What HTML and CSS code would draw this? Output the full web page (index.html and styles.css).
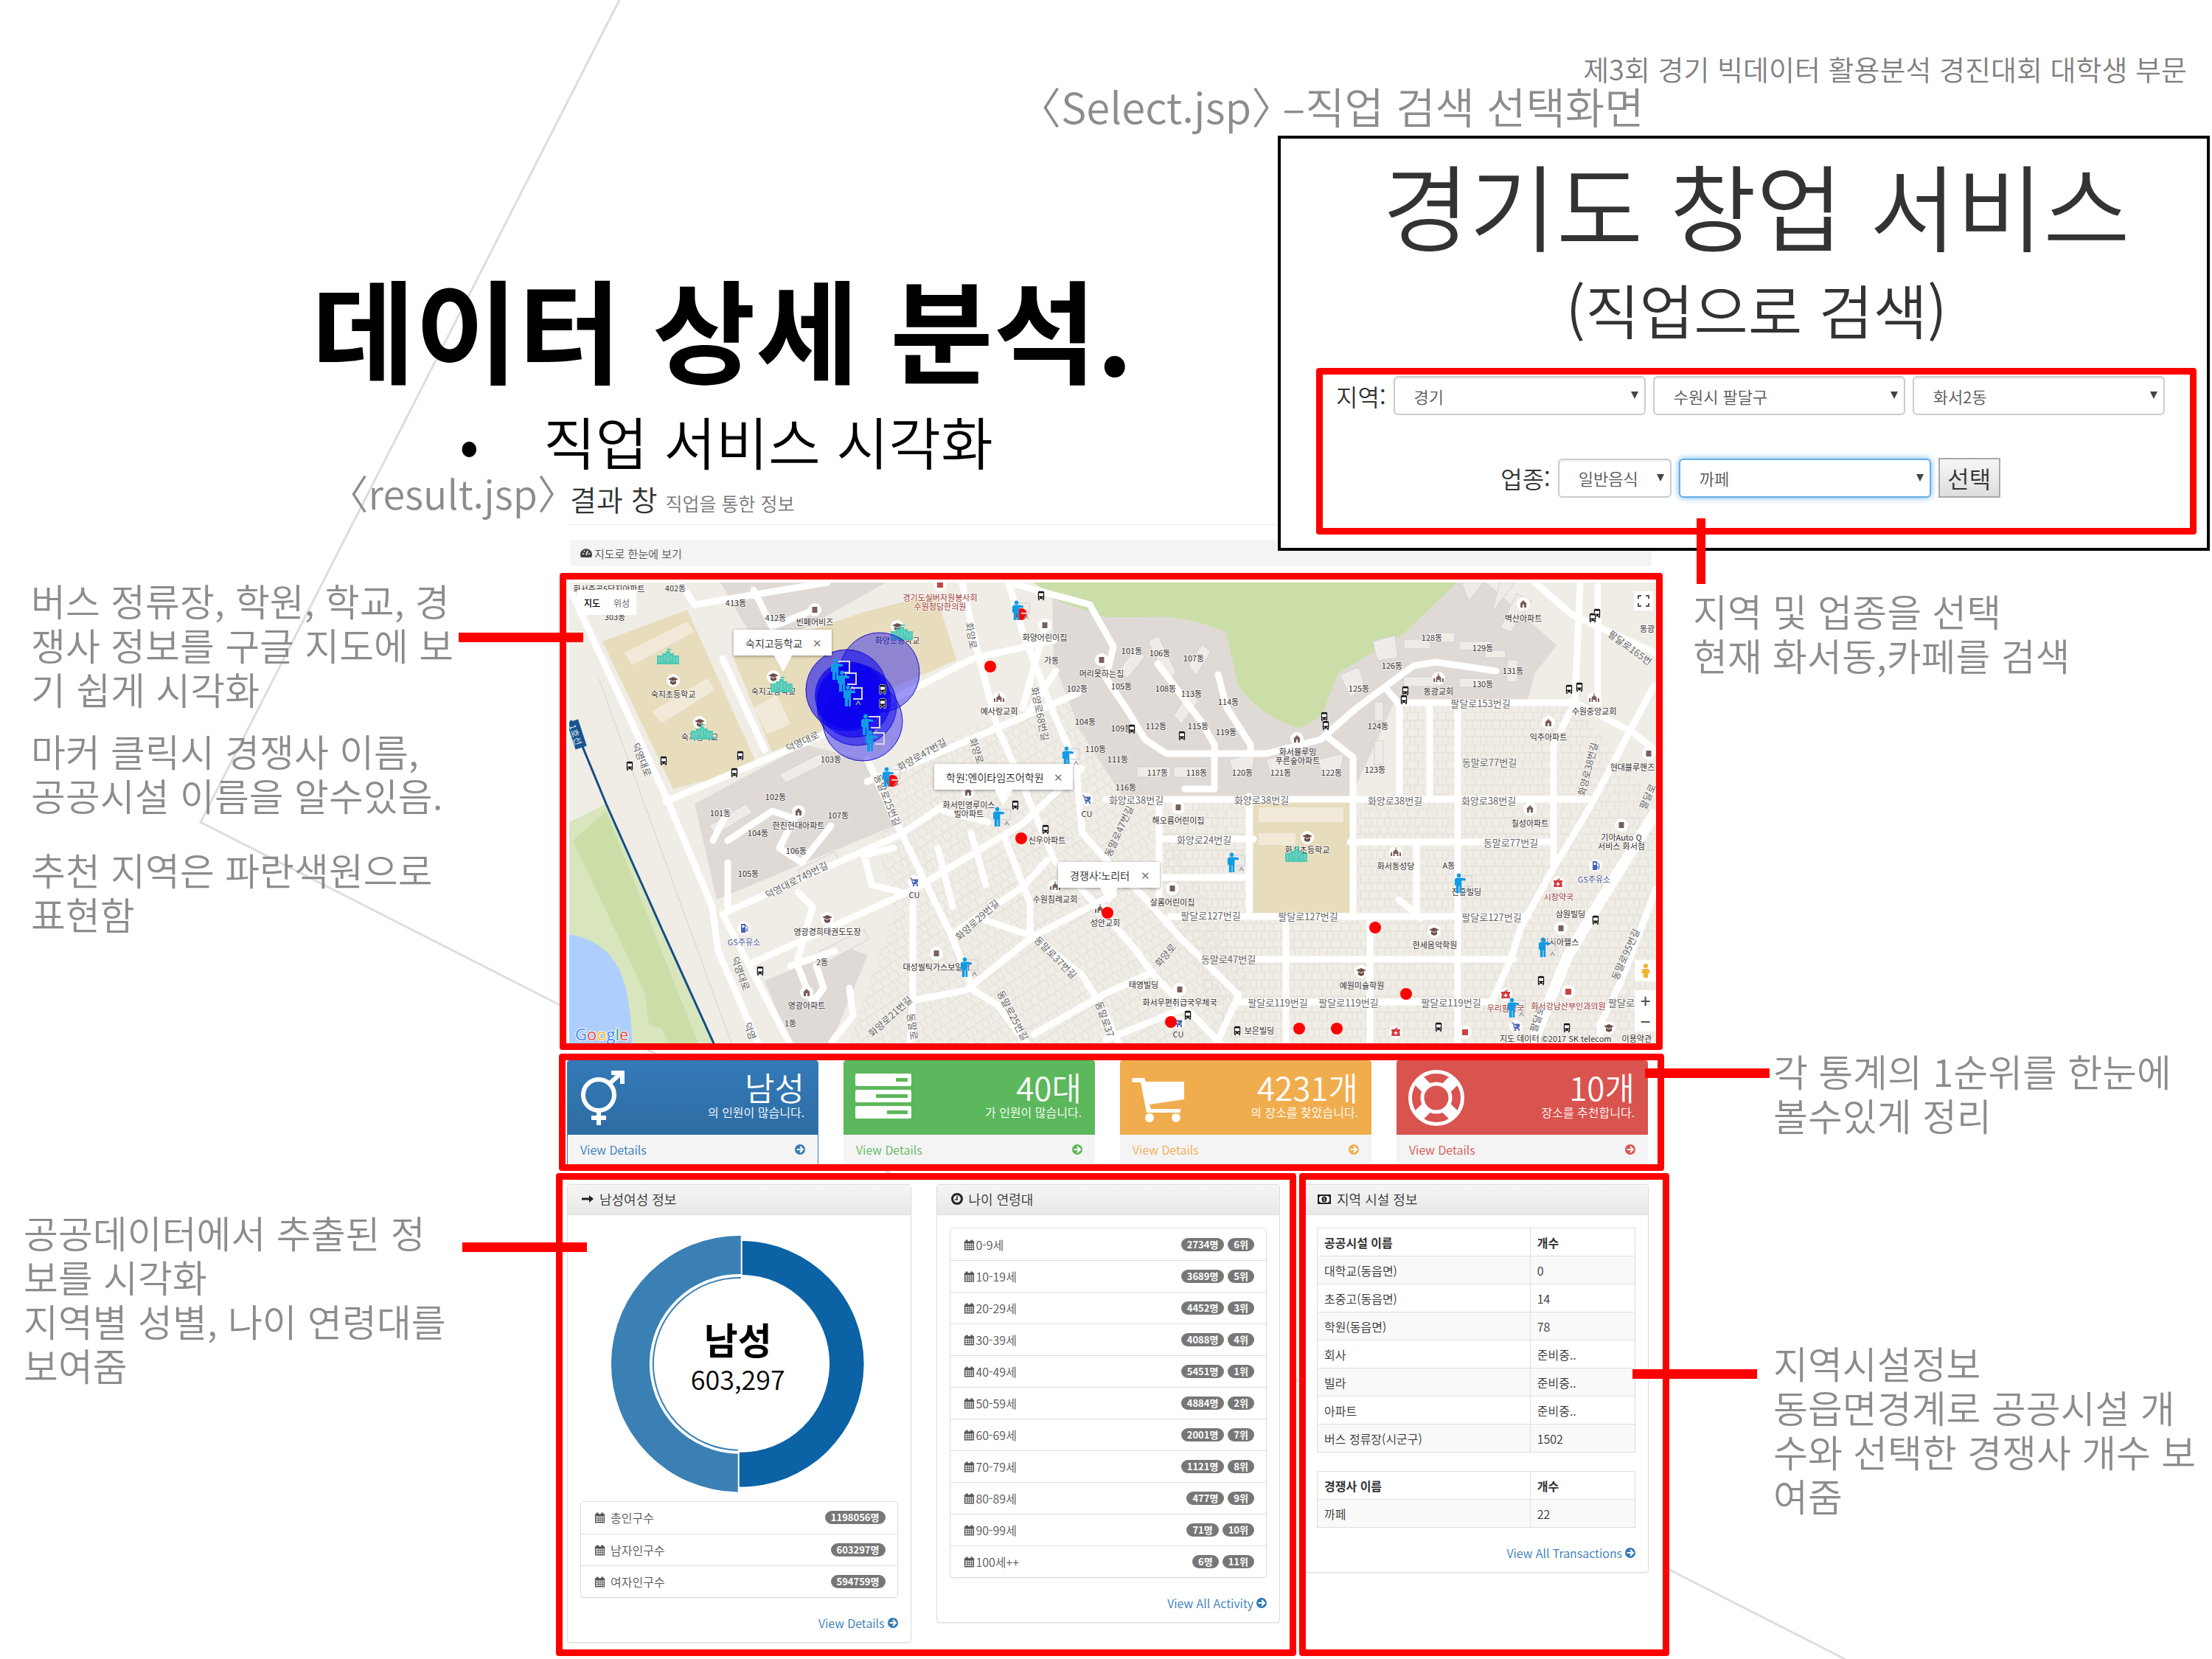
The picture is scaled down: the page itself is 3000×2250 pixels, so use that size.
FILE: index.html
```html
<!DOCTYPE html>
<html lang="ko">
<head>
<meta charset="utf-8">
<title>데이터 상세 분석</title>
<link rel="stylesheet" href="styles.css">
</head>
<body>
<svg class="defs" aria-hidden="true">
  <defs>
    <symbol id="calendar" viewBox="0 0 16 16"><path fill="currentColor" d="M1 3h2V1h3v2h4V1h3v2h2v13H1z"/><path fill="#fff" d="M2.500 6.500h2.500v2H2.500zM6 6.500h2v2H6zM9 6.500h2v2H9zM12 6.500h1.700v2H12zM2.500 9.500h2.500v2H2.500zM6 9.500h2v2H6zM9 9.500h2v2H9zM12 9.500h1.700v2H12zM2.500 12.500h2.500v2H2.500zM6 12.500h2v2H6zM9 12.500h2v2H9zM12 12.500h1.700v2H12z"/></symbol>
    <symbol id="go" viewBox="0 0 16 16"><circle cx="8" cy="8" r="8" fill="currentColor"/><path d="M3 8h9M8 3.500 12.500 8 8 12.500" fill="none" stroke="#fff" stroke-width="2.400"/></symbol>
    <symbol id="bus" viewBox="0 0 12 14"><path fill="#111" stroke="#fff" stroke-width=".6" d="M3 .5h6l1.500 1.500v9.500H10V13.500H8V11.500H4v2H2v-2h-.5V2z"/><path fill="#fff" d="M3 3.500h6v4H3zM3 9h1.500v1.200H3zM7.500 9H9v1.200H7.500z"/></symbol>
    <symbol id="school" viewBox="0 0 30 22"><path fill="#52c9b4" d="M0 10h7V7h5V4h2V0h1v1h4v2h-4v1h3v3h5v3h7v12H0z"/><path stroke="#8adccc" d="M3 12v7M7 12v7M11 10v6M19 10v6M23 12v7M27 12v7M15 7v12" stroke-width="1"/></symbol>
    <symbol id="teacher" viewBox="0 0 28 30"><path d="M10 4h15v15H13" fill="none" stroke="#ddd8de" stroke-width="2"/><path d="m17 27 3-5 3 5" fill="none" stroke="#999" stroke-width="1.500"/><circle cx="6" cy="3.500" r="3" fill="#109be4"/><path fill="#109be4" d="M2 7h8l6 1v3h-6v18H7V19H6v10H2V18H0V9z"/></symbol>
    <symbol id="place" viewBox="0 0 20 20"><circle cx="10" cy="10" r="9" fill="#fff"/><path fill="#7b5f59" d="M6.500 6h7v8h-7z"/></symbol>
    <symbol id="home" viewBox="0 0 20 20"><circle cx="10" cy="10" r="9" fill="#fff"/><path fill="#7b5f59" d="m10 5 5 5h-1v5h-3v-4H9v4H6v-5H5z"/></symbol>
    <symbol id="church" viewBox="0 0 20 20"><circle cx="10" cy="10" r="9" fill="#fff"/><path fill="#7b5f59" d="M9.500 3h1v3l3 3v6h-2v-3h-3v3h-2V9l3-3zM3 10h2v5H3zM15 10h2v5h-2z"/></symbol>
    <symbol id="cap" viewBox="0 0 20 20"><circle cx="10" cy="10" r="9" fill="#fff"/><path fill="#6d4f49" d="m10 5 7 3-7 3-7-3zM6 10l4 2 4-2v4l-4 2-4-2z"/></symbol>
    <symbol id="pharm" viewBox="0 0 20 20"><circle cx="10" cy="10" r="9" fill="#fff"/><path fill="#d5373b" d="M4 6h4l4-3 1 1-2 2h5v2l-1 1 1 6H4l1-6-1-1z"/><path d="M10 8.500v5M7.500 11h5" stroke="#fff" stroke-width="1.500"/></symbol>
    <symbol id="clinic" viewBox="0 0 20 20"><circle cx="10" cy="10" r="9" fill="#fff"/><path fill="#c9433f" d="M6 6h8v8H6z"/></symbol>
    <symbol id="cart" viewBox="0 0 20 20"><circle cx="10" cy="10" r="9" fill="#fff"/><path d="M4 5h2l2 8h7M7 7h8l-1 4H8" fill="#4a63b5" stroke="#4a63b5"/><circle cx="9" cy="15" r="1.200" fill="#4a63b5"/><circle cx="14" cy="15" r="1.200" fill="#4a63b5"/></symbol>
    <symbol id="gas" viewBox="0 0 20 20"><circle cx="10" cy="10" r="9" fill="#fff"/><path fill="#4a63b5" d="M6 4h6v12H6z"/><path fill="#fff" d="M7.500 6h3v3h-3z"/><path d="M12 6l3 2v6h-2v-4" fill="none" stroke="#4a63b5"/></symbol>
    <pattern id="lots" width="26" height="22" patternUnits="userSpaceOnUse"><path d="M0 0h26M0 11h26M7 0v11M19 0v11M3 11v11M14 11v11M22 11v11" fill="none" stroke="#e0dcd3"/></pattern>
    <pattern id="lots-tilt" width="26" height="22" patternUnits="userSpaceOnUse" patternTransform="rotate(-33)"><path d="M0 0h26M0 11h26M7 0v11M19 0v11M3 11v11M14 11v11M22 11v11" fill="none" stroke="#e0dcd3"/></pattern>
  </defs>
</svg>

<div class="slide">
  <svg class="backdrop" viewBox="0 0 3000 2250" preserveAspectRatio="none" aria-hidden="true"><path d="M840 0 272 1115 2502 2250"/></svg>

  <header class="top">
    <p class="contest">제3회 경기 빅데이터 활용분석 경진대회 대학생 부문</p>
    <p class="caption"><span class="angle">〈</span>Select.jsp<span class="angle">〉</span> –직업 검색 선택화면</p>
  </header>

  <section class="hero">
    <h1>데이터 상세 분석.</h1>
    <ul><li>직업 서비스 시각화</li></ul>
  </section>

  <section class="search-card">
    <h2>경기도 창업 서비스</h2>
    <h3>(직업으로 검색)</h3>
    <form class="search-form">
      <div class="field-row">
        <label for="sido">지역:</label>
        <span class="select"><select id="sido"><option>경기</option></select></span>
        <span class="select"><select aria-label="시군구"><option>수원시 팔달구</option></select></span>
        <span class="select"><select aria-label="동"><option>화서2동</option></select></span>
      </div>
      <div class="field-row centered">
        <label for="kind">업종:</label>
        <span class="select short"><select id="kind"><option>일반음식</option></select></span>
        <span class="select focused"><select aria-label="세부 업종"><option>까페</option></select></span>
        <button type="button">선택</button>
      </div>
    </form>
    <i class="line line-down"></i>
  </section>

  <main class="board">
    <aside class="notes left">
      <p class="file"><span class="angle">〈</span>result.jsp<span class="angle">〉</span></p>
      <p class="note n-map">버스 정류장, 학원, 학교, 경<br>쟁사 정보를 구글 지도에 보<br>기 쉽게 시각화<i class="line"></i></p>
      <p class="note n-marker">마커 클릭시 경쟁사 이름,<br>공공시설 이름을 알수있음.</p>
      <p class="note n-circle">추천 지역은 파란색원으로<br>표현함</p>
      <p class="note n-public">공공데이터에서 추출된 정<br>보를 시각화<br>지역별 성별, 나이 연령대를<br>보여줌<i class="line"></i></p>
    </aside>

    <div class="dash">
      <div class="dash-head"><h2>결과 창 <small>직업을 통한 정보</small></h2></div>
      <div class="map-title"><svg width="16" height="14" viewBox="0 0 16 14"><path fill="#444" d="M1 13a8 8 0 1 1 14 0z"/><path stroke="#fff" stroke-width="1.500" d="M8 10 10 4M3 8h2M11 8h2M5 4l1 1"/></svg>지도로 한눈에 보기</div>

      <div class="frame map-frame">
        <div class="map">
          <svg class="map-art" viewBox="0 0 1474 625" role="img" aria-label="화서동 지도">
            <rect width="1474" height="625" fill="#f0ede6"/>
            <path fill="url(#lots-tilt)" d="M400 270 560 190 700 150 800 300 920 540 880 625H380l60-180z"/>
            <path fill="url(#lots)" d="M800 295h670v330H900L800 430zM1130 165h235l105 130h-340z"/>
            <path fill="#dfdad6" d="M150 0h280L260 95 205 0zM655 10l235 40L1204 0h40l95 85-30 40-10 38h-180l-60 130H752l-60-95-35-90zM170 300l150-80 80 20 40 90-240 100zM265 540l110-45 30 10-50 120h-55z"/>
            <path fill="#e7dcbc" d="M45 80 160 37l96 213-115 30zM222 100 400 40l97-25 28 90-125 55-63 45-62 25zM928 290h131v158H928z"/>
            <path fill="#f1ead9" d="m75 95 85-42 10 14-85 45zM112 175l75-45 10 16-72 45zM250 170l32-18 18 40-32 14zM935 305h115v20H935zM935 340h50v16h-50z"/>
            <path fill="#cbdea8" d="M630 0h574l-73 70-88 53-21 54q-30 28-42 17-45-15-72-54l-18-73q-60-25-112-20h-50l-60-20z"/>
            <path fill="#d8e5bd" d="M0 325 50 300l146 325H85L60 510 0 475z"/><path fill="#cbdea8" d="m5 350 45-40 125 315h-40zM90 450l50 160-32-10z"/>
            <path fill="#aeceff" d="M0 477q60 10 76 70 9 40 9 78H0z"/>
            <g class="blocks"><path d="m745 120 22-30 14 10-24 30zM785 80l14-8 24 50-12 10zM840 112l18-28 12 10-20 32zM820 180l20-30 14 10-24 32zM770 250h45v14h-45zM820 250h45v14h-45zM895 240l35-8-4 26-24 4zM945 240l35-8-4 26-24 4zM1015 240l35-8-4 26-24 4zM1132 77h36v13h-36zM1165 68h36v13h-36zM1207 80h44v12h-44zM1242 92h28v10h-28zM1132 128h44v13h-44zM1207 130h44v12h-44zM1272 105h14v30h-14zM1090 80l30-8 4 30-28 4zM1045 125l26-10 8 26-20 14zM1092 162h12v25h-12zM1092 215h12v32h-12zM1210 0l30 0-20 25zM1262 0h20l-30 40zM1285 15l20 10-28 42-14-6zM190 330l50-30 8 12-50 30zM310 390l50-25 6 12-50 26zM340 500l60-30 6 14-55 30zM285 260l55-28 8 12-55 28z"/></g>
            <g class="roads">
              <path d="M0 7 131 290l63 150 8 60 54 125M208 450l91 175M131 297l206-87 211-107 110-25M533 0l22 100 26 97 29 66 48 114 62 66 47 54 26 36 90 92M596 0l19 67 43 113 29 67 9 93 42 47 38 36 54 60 78 77-30 65M596 0l110 30 32 57-10 43 29 43 24 40 29 19h136l73-19 49-43 77-57 30-5 82 12M1029 210l34 27v216M1107 143l17 20h240l78 40 32 26M1371 0l-7 163-29 57v167M1310 0l49 43 130 60M1126 163v131M1167 163v131M1205 163v462M728 294h662M1471 140l-88 167-48 80-44 80-15 46-24 54"/>
              <path d="M1474 415l-47 125-29 60v25M800 348h128M1059 352h276M801 400h121M815 453h486M932 511h349M908 569h344M800 294v140M922 290v163M972 453v172M1086 453v172M1149 352v98M208 103l57 124M213 447l234-104 60-40M404 240l43 93 72 147 29 73 33 20 39 52M246 517l220-100 149-90 80-75M466 567l72-14 91-73 109-57M562 457l67 23 67 53 29 47 20 45M466 433v134l-4 58M629 613l99-56 60-27M728 620l107-43M404 270l76-30 101-43 109-47M648 377l-33 36-96 64M380 550l5 37-29 36M798 110l60 80 17 30v60h-40M880 125l12 45 32 50v12M250 10l25 50 50-20M150 0l20 30 60-10 120-20M215 350l60-40 30 10-20 40 30 20 40-50M195 350l20-40M215 440v-60M310 420l20 20-20 70M300 520l60-20M310 520l20 50 15-20-10-30M440 360l-40 10 10 40 40 10M508 310l60 15M545 340l20 70M500 360l20 80M590 345l35 90v50M660 120l-40 60M645 60l-30 110M1125 430l30 25M1395 165v-160"/>
            </g>
            <path d="M1474 310l-76 123-44 74-48 118" fill="none" stroke="#fff" stroke-width="15"/>
            <path d="M2 187 17 220 50 300 127 473 196 625" fill="none" stroke="#134d86" stroke-width="3"/>
            <path d="m40 130 180 495" fill="none" stroke="#d7d2cb"/>

            <g class="lb road">
              <text x="316" y="215" transform="rotate(-25 316 215)">덕영대로</text><text x="99" y="240" transform="rotate(68 99 240)">덕영대로</text><text x="478" y="233" transform="rotate(-30 478 233)">화양로47번길</text><text x="546" y="72" transform="rotate(80 546 72)">화양로</text><text x="553" y="228" transform="rotate(72 553 228)">화양로</text><text x="639" y="178" transform="rotate(78 639 178)">화양로68번길</text><text x="432" y="295" transform="rotate(68 432 295)">동말로25번길</text>
              <text x="308" y="403" transform="rotate(-27 308 403)">덕영대로749번길</text><text x="233" y="530" transform="rotate(70 233 530)">덕영대로</text><text x="553" y="457" transform="rotate(-42 553 457)">화양로29번길</text><text x="660" y="508" transform="rotate(45 660 508)">동말로37번길</text><text x="435" y="588" transform="rotate(-42 435 588)">화양로21번길</text><text x="602" y="587" transform="rotate(62 602 587)">동말로25번길</text><text x="466" y="602" transform="rotate(82 466 602)">동말로</text><text x="727" y="592" transform="rotate(70 727 592)">동말로37</text><text x="246" y="608" transform="rotate(70 246 608)">덕영</text>
              <text x="1236" y="163">팔달로153번길</text><text x="1248" y="243">동말로77번길</text><text x="769" y="294">화양로38번길</text><text x="939" y="294">화양로38번길</text><text x="1120" y="295">화양로38번길</text><text x="1247" y="295">화양로38번길</text><text x="1439" y="88" transform="rotate(36 1439 88)">팔달로165번</text><text x="1381" y="253" transform="rotate(-76 1381 253)">화양로38번길</text>
              <text x="745" y="337" transform="rotate(-65 745 337)">동말로47번길</text><text x="861" y="348">화양로24번길</text><text x="1277" y="352">동말로77번길</text><text x="870" y="451">팔달로127번길</text><text x="1002" y="452">팔달로127번길</text><text x="1251" y="453">팔달로127번길</text><text x="894" y="510">동말로47번길</text><text x="808" y="505" transform="rotate(-50 808 505)">화양로</text><text x="961" y="569">팔달로119번길</text><text x="1057" y="569">팔달로119번길</text><text x="1196" y="569">팔달로119번길</text><text x="1427" y="569">팔달로</text><text x="1432" y="504" transform="rotate(-66 1432 504)">동말로95번길</text><text x="1312" y="592" transform="rotate(-72 1312 592)">팔달로</text><text x="1462" y="290" transform="rotate(-66 1462 290)">팔달로</text>
            </g>
            <g class="lb">
              <text x="54" y="8">화서주공5단지아파트</text><text x="144" y="7">402동</text><text x="226" y="27">413동</text><text x="280" y="47">412동</text><text x="62" y="46">303동</text><text x="333" y="53">빈페어비즈</text><text x="645" y="74">화양어린이집</text><text x="654" y="105">가동</text><text x="722" y="123">머리못하는집</text><text x="689" y="143">102동</text><text x="583" y="174">예사랑교회</text><text x="700" y="188">104동</text><text x="714" y="225">110동</text><text x="445" y="78">화양초등학교</text><text x="141" y="151">숙지초등학교</text><text x="277" y="147">숙지고등학교</text><text x="177" y="209">숙지중학교</text><text x="355" y="239">103동</text><text x="280" y="290">102동</text><text x="205" y="312">101동</text><text x="542" y="301">화서민영루이스</text><text x="542" y="313">빌아파트</text><text x="702" y="313">CU</text>
              <text x="763" y="92">101동</text><text x="801" y="95">106동</text><text x="847" y="102">107동</text><text x="749" y="140">105동</text><text x="809" y="143">108동</text><text x="844" y="150">113동</text><text x="894" y="161">114동</text><text x="749" y="197">109동</text><text x="796" y="194">112동</text><text x="853" y="194">115동</text><text x="891" y="202">119동</text><text x="744" y="239">111동</text><text x="798" y="257">117동</text><text x="851" y="257">118동</text><text x="913" y="257">120동</text><text x="965" y="257">121동</text><text x="1034" y="257">122동</text><text x="1093" y="253">123동</text><text x="1097" y="194">124동</text><text x="1071" y="143">125동</text><text x="1116" y="112">126동</text><text x="1170" y="74">128동</text><text x="1239" y="88">129동</text><text x="1239" y="137">130동</text><text x="1280" y="119">131동</text><text x="755" y="277">116동</text><text x="1179" y="147">동광교회</text><text x="1294" y="48">벽산아파트</text><text x="988" y="229">화서블루밍</text><text x="988" y="241">푸른숲아파트</text><text x="1328" y="209">익주아파트</text><text x="1390" y="174">수원중앙교회</text><text x="1442" y="250">현대블루핸즈</text><text x="1462" y="62">동광</text>
              <text x="311" y="329">한진현대아파트</text><text x="365" y="315">107동</text><text x="256" y="339">104동</text><text x="308" y="363">106동</text><text x="243" y="394">105동</text><text x="468" y="423">CU</text><text x="350" y="473">영광경희태권도도장</text><text x="343" y="514">2동</text><text x="322" y="573">영광아파트</text><text x="300" y="597">1동</text><text x="498" y="521">대성씰틱가스보일러</text><text x="648" y="349">신우아파트</text><text x="659" y="429">수원침례교회</text><text x="727" y="461">성안교회</text>
              <text x="826" y="322">해오름어린이집</text><text x="1001" y="362">화서초등학교</text><text x="1303" y="326">칠성아파트</text><text x="1427" y="345">기아Auto Q</text><text x="1427" y="357">서비스 화서점</text><text x="1121" y="384">화서동성당</text><text x="1193" y="383">A동</text><text x="1217" y="419">진흥빌딩</text><text x="1358" y="449">삼원빌딩</text><text x="1344" y="487">리치아헬스</text><text x="818" y="433">살롬어린이집</text><text x="1174" y="491">한세음악학원</text><text x="1075" y="546">예원미술학원</text><text x="779" y="545">태영빌딩</text><text x="828" y="569">화서우편취급국우체국</text><text x="826" y="612">CU</text><text x="936" y="607">보은빌딩</text><text x="1365" y="618">지도 데이터 ©2017 SK telecom　 이용약관</text>
            </g>
            <g class="lb blue"><text x="237" y="487">GS주유소</text><text x="1390" y="402">GS주유소</text></g>
            <g class="lb red"><text x="503" y="20">경기도실버자원봉사회</text><text x="503" y="32">수원청담한의원</text><text x="1342" y="426">시장약국</text><text x="1270" y="577">우리팜약국</text><text x="1355" y="574">화서강남산부인과의원</text></g>
            <g transform="rotate(72 10 205)"><rect x="-8" y="197" width="38" height="16" fill="#17558f"/><text class="line-no" x="11" y="206">1호선</text></g>

            <g>
              <use href="#place" x="323" y="27" width="20" height="20"/><use href="#clinic" x="493" y="-7" width="20" height="20"/><use href="#place" x="635" y="48" width="20" height="20"/><use href="#place" x="712" y="95" width="20" height="20"/><use href="#church" x="573" y="147" width="20" height="20"/><use href="#cap" x="435" y="50" width="20" height="20"/><use href="#cap" x="131" y="123" width="20" height="20"/><use href="#cap" x="267" y="118" width="20" height="20"/><use href="#cap" x="167" y="180" width="20" height="20"/><use href="#home" x="531" y="274" width="20" height="20"/><use href="#cart" x="692" y="284" width="20" height="20"/>
              <use href="#church" x="1169" y="120" width="20" height="20"/><use href="#home" x="1284" y="19" width="20" height="20"/><use href="#home" x="977" y="202" width="20" height="20"/><use href="#home" x="1318" y="180" width="20" height="20"/><use href="#church" x="1380" y="147" width="20" height="20"/><use href="#place" x="1454" y="222" width="20" height="20"/>
              <use href="#home" x="301" y="301" width="20" height="20"/><use href="#cart" x="458" y="396" width="20" height="20"/><use href="#gas" x="227" y="459" width="20" height="20"/><use href="#cap" x="340" y="446" width="20" height="20"/><use href="#home" x="312" y="546" width="20" height="20"/><use href="#place" x="488" y="493" width="20" height="20"/><use href="#church" x="649" y="402" width="20" height="20"/><use href="#church" x="710" y="433" width="20" height="20"/>
              <use href="#place" x="816" y="295" width="20" height="20"/><use href="#cap" x="991" y="336" width="20" height="20"/><use href="#home" x="1293" y="297" width="20" height="20"/><use href="#place" x="1417" y="319" width="20" height="20"/><use href="#gas" x="1382" y="374" width="20" height="20"/><use href="#church" x="1111" y="356" width="20" height="20"/><use href="#pharm" x="1331" y="398" width="20" height="20"/><use href="#place" x="1335" y="459" width="20" height="20"/><use href="#place" x="808" y="405" width="20" height="20"/><use href="#cap" x="1163" y="463" width="20" height="20"/><use href="#cap" x="1064" y="518" width="20" height="20"/><use href="#place" x="818" y="542" width="20" height="20"/><use href="#pharm" x="1111" y="600" width="20" height="20"/><use href="#clinic" x="1205" y="600" width="20" height="20"/><use href="#cart" x="1274" y="592" width="20" height="20"/><use href="#pharm" x="1260" y="549" width="20" height="20"/><use href="#clinic" x="1345" y="545" width="20" height="20"/><use href="#cap" x="1400" y="594" width="20" height="20"/><use href="#cart" x="816" y="587" width="20" height="20"/>
            </g>
            <g>
              <use href="#school" x="119" y="89" width="30" height="22"/><use href="#school" x="273" y="127" width="30" height="22"/><use href="#school" x="165" y="191" width="30" height="22"/><use href="#school" x="436" y="56" width="30" height="22"/><use href="#school" x="971" y="357" width="30" height="22"/>
            </g>
            <g fill="#0a00f0" stroke="#1a12c8">
              <circle cx="421" cy="122" r="54" fill-opacity=".4"/><circle cx="376" cy="146" r="55" fill-opacity=".55"/><circle cx="398" cy="188" r="54" fill-opacity=".4"/><circle cx="390" cy="167" r="54" fill-opacity=".5"/><circle cx="386" cy="160" r="50" fill-opacity=".6"/><circle cx="379" cy="153" r="46" fill-opacity=".7" stroke="none"/>
            </g>
            <g>
              <use href="#bus" x="634" y="11" width="12" height="14"/><use href="#bus" x="76" y="242" width="12" height="14"/><use href="#bus" x="122" y="235" width="12" height="14"/><use href="#bus" x="226" y="228" width="12" height="14"/><use href="#bus" x="218" y="251" width="12" height="14"/><use href="#bus" x="599" y="295" width="12" height="14"/><use href="#bus" x="419" y="138" width="12" height="14"/><use href="#bus" x="419" y="157" width="12" height="14"/><use href="#bus" x="1388" y="35" width="12" height="14"/><use href="#bus" x="1382" y="41" width="12" height="14"/><use href="#bus" x="1350" y="138" width="12" height="14"/><use href="#bus" x="1364" y="135" width="12" height="14"/><use href="#bus" x="1128" y="140" width="12" height="14"/><use href="#bus" x="1126" y="152" width="12" height="14"/><use href="#bus" x="1018" y="175" width="12" height="14"/><use href="#bus" x="1020" y="187" width="12" height="14"/><use href="#bus" x="757" y="192" width="12" height="14"/><use href="#bus" x="825" y="201" width="12" height="14"/><use href="#bus" x="253" y="520" width="12" height="14"/><use href="#bus" x="640" y="328" width="12" height="14"/><use href="#bus" x="1386" y="451" width="12" height="14"/><use href="#bus" x="833" y="580" width="12" height="14"/><use href="#bus" x="900" y="601" width="12" height="14"/><use href="#bus" x="1173" y="596" width="12" height="14"/><use href="#bus" x="1347" y="597" width="12" height="14"/><use href="#bus" x="1312" y="533" width="12" height="14"/>
            </g>
            <g fill="#f00"><circle cx="571" cy="114" r="8"/><circle cx="613" cy="43" r="8"/><circle cx="438" cy="269" r="8"/><circle cx="613" cy="347" r="8"/><circle cx="730" cy="448" r="8"/><circle cx="1093" cy="468" r="8"/><circle cx="1135" cy="558" r="8"/><circle cx="816" cy="596" r="8"/><circle cx="990" cy="605" r="8"/><circle cx="1041" cy="605" r="8"/></g>
            <g>
              <use href="#teacher" x="600" y="24" width="28" height="28"/><use href="#teacher" x="668" y="222" width="28" height="28"/><use href="#teacher" x="424" y="250" width="28" height="28"/><use href="#teacher" x="355" y="103" width="28" height="30"/><use href="#teacher" x="364" y="119" width="28" height="30"/><use href="#teacher" x="372" y="139" width="28" height="30"/><use href="#teacher" x="396" y="178" width="28" height="30"/><use href="#teacher" x="402" y="200" width="28" height="30"/><use href="#teacher" x="574" y="304" width="28" height="28"/><use href="#teacher" x="530" y="508" width="28" height="28"/><use href="#teacher" x="892" y="366" width="28" height="28"/><use href="#teacher" x="1200" y="394" width="28" height="28"/><use href="#teacher" x="1314" y="481" width="28" height="28"/><use href="#teacher" x="1272" y="563" width="28" height="28"/>
            </g>
            <text class="google" x="8" y="621"><tspan fill="#4285f4">G</tspan><tspan fill="#ea4335">o</tspan><tspan fill="#fbbc05">o</tspan><tspan fill="#4285f4">g</tspan><tspan fill="#34a853">l</tspan><tspan fill="#ea4335">e</tspan></text>
          </svg>
          <div class="map-type"><button type="button" class="on">지도</button><button type="button">위성</button></div>
          <div class="info info-a">숙지고등학교<button type="button" aria-label="닫기">✕</button></div>
          <div class="info info-b">학원:엔이타임즈어학원<button type="button" aria-label="닫기">✕</button></div>
          <div class="info info-c">경쟁사:노리터<button type="button" aria-label="닫기">✕</button></div>
          <button type="button" class="full" aria-label="전체화면"><svg width="16" height="16" viewBox="0 0 16 16"><path d="M1 5V1h4M11 1h4v4M15 11v4h-4M5 15H1v-4" fill="none" stroke="#555" stroke-width="2"/></svg></button>
          <div class="map-zoom">
            <button type="button" class="peg" aria-label="스트리트 뷰"><svg width="12" height="20" viewBox="0 0 12 20"><circle cx="6" cy="3" r="3" fill="#f3b32a"/><path fill="#f3b32a" d="M2 7h8l2 6H9v6H3v-6H0z"/></svg></button>
            <button type="button">+</button><button type="button">−</button>
          </div>
        </div>
      </div>

      <div class="frame stats">
        <article class="stat blue">
          <div class="stat-top"><svg width="62" height="76" viewBox="0 0 62 76"><g fill="none" stroke="#fff" stroke-width="6"><circle cx="26" cy="34" r="21"/><path d="M40 19 57 4M43 4h15v15M26 55v20M16 65h20"/></g></svg><div><strong>남성</strong><span>의 인원이 많습니다.</span></div></div>
          <a href="#">View Details<svg width="14" height="14"><use href="#go"/></svg></a>
        </article>
        <article class="stat green">
          <div class="stat-top"><svg width="76" height="76" viewBox="0 0 76 76"><g fill="#fff"><rect y="5" width="76" height="17" rx="2"/><rect y="27" width="76" height="17" rx="2"/><rect y="49" width="76" height="17" rx="2"/></g><path fill="#5cb85c" d="M55 11h16v5H55zM28 33h43v5H28zM43 55h28v5H43z"/></svg><div><strong>40대</strong><span>가 인원이 많습니다.</span></div></div>
          <a href="#">View Details<svg width="14" height="14"><use href="#go"/></svg></a>
        </article>
        <article class="stat orange">
          <div class="stat-top"><svg width="72" height="76" viewBox="0 0 72 76"><path fill="#fff" d="M3 11h14l2 5h52v24L24 47l2 6h40v5H20L12 17H3a3 3 0 0 1 0-6z"/><circle cx="24" cy="65" r="6" fill="#fff"/><circle cx="60" cy="65" r="6" fill="#fff"/></svg><div><strong>4231개</strong><span>의 장소를 찾았습니다.</span></div></div>
          <a href="#">View Details<svg width="14" height="14"><use href="#go"/></svg></a>
        </article>
        <article class="stat crimson">
          <div class="stat-top"><svg width="76" height="76" viewBox="0 0 76 76"><g fill="none" stroke="#fff"><circle cx="38" cy="38" r="35.500" stroke-width="5"/><circle cx="38" cy="38" r="19" stroke-width="5"/><path stroke-width="16" d="m14 14 10 10M62 14 52 24M14 62l10-10M62 62 52 52"/></g></svg><div><strong>10개</strong><span>장소를 추천합니다.</span></div></div>
          <a href="#">View Details<svg width="14" height="14"><use href="#go"/></svg></a>
        </article>
      </div>

      <div class="lower">
        <div class="frame people">
          <section class="panel">
            <h3><svg width="16" height="12" viewBox="0 0 16 12"><path fill="#222" d="M0 4.500h10V1l6 5-6 5V7.500H0z"/></svg>남성여성 정보</h3>
            <svg class="donut" viewBox="0 0 465 388" role="img" aria-label="남성 603,297">
              <path fill="#3a80b5" d="M235 28A174 174 0 0 0 231 376V324A122 122 0 0 1 235 80z"/>
              <path fill="#0b62a4" d="M237 35A167 167 0 0 1 233 369V322A120 120 0 0 0 237 81z"/>
              <path fill="none" stroke="#3a80b5" stroke-width="2" d="M235 85A117 117 0 0 0 231 319"/>
              <text class="donut-name" x="231" y="189">남성</text>
              <text class="donut-value" x="231" y="237">603,297</text>
            </svg>
            <ul class="rows spaced">
              <li><svg width="15" height="16"><use href="#calendar"/></svg>총인구수<b>1198056명</b></li>
              <li><svg width="15" height="16"><use href="#calendar"/></svg>남자인구수<b>603297명</b></li>
              <li><svg width="15" height="16"><use href="#calendar"/></svg>여자인구수<b>594759명</b></li>
            </ul>
            <a class="more" href="#">View Details<svg width="14" height="14"><use href="#go"/></svg></a>
          </section>
          <section class="panel">
            <h3><svg width="16" height="16" viewBox="0 0 16 16"><circle cx="8" cy="8" r="6.500" fill="none" stroke="#222" stroke-width="3"/><path d="M8 4v5H5" fill="none" stroke="#222" stroke-width="1.500"/></svg>나이 연령대</h3>
            <ul class="rows ages">
              <li><svg width="15" height="16"><use href="#calendar"/></svg>0-9세<b>2734명</b><b>6위</b></li>
              <li><svg width="15" height="16"><use href="#calendar"/></svg>10-19세<b>3689명</b><b>5위</b></li>
              <li><svg width="15" height="16"><use href="#calendar"/></svg>20-29세<b>4452명</b><b>3위</b></li>
              <li><svg width="15" height="16"><use href="#calendar"/></svg>30-39세<b>4088명</b><b>4위</b></li>
              <li><svg width="15" height="16"><use href="#calendar"/></svg>40-49세<b>5451명</b><b>1위</b></li>
              <li><svg width="15" height="16"><use href="#calendar"/></svg>50-59세<b>4884명</b><b>2위</b></li>
              <li><svg width="15" height="16"><use href="#calendar"/></svg>60-69세<b>2001명</b><b>7위</b></li>
              <li><svg width="15" height="16"><use href="#calendar"/></svg>70-79세<b>1121명</b><b>8위</b></li>
              <li><svg width="15" height="16"><use href="#calendar"/></svg>80-89세<b>477명</b><b>9위</b></li>
              <li><svg width="15" height="16"><use href="#calendar"/></svg>90-99세<b>71명</b><b>10위</b></li>
              <li><svg width="15" height="16"><use href="#calendar"/></svg>100세++<b>6명</b><b>11위</b></li>
            </ul>
            <a class="more" href="#">View All Activity<svg width="14" height="14"><use href="#go"/></svg></a>
          </section>
        </div>
        <div class="frame places">
          <section class="panel flush">
            <h3><svg width="18" height="13" viewBox="0 0 18 13"><path fill="#222" d="M0 0h18v13H0z"/><path fill="#fff" d="M4 2h10l2 2v5l-2 2H4L2 9V4z"/><ellipse cx="9" cy="6.500" rx="3.500" ry="4" fill="#222"/><path d="M9 4v5" stroke="#fff"/></svg>지역 시설 정보</h3>
            <table>
              <thead><tr><th>공공시설 이름</th><th>개수</th></tr></thead>
              <tbody>
                <tr><td>대학교(동읍면)</td><td>0</td></tr>
                <tr><td>초중고(동읍면)</td><td>14</td></tr>
                <tr><td>학원(동읍면)</td><td>78</td></tr>
                <tr><td>회사</td><td>준비중..</td></tr>
                <tr><td>빌라</td><td>준비중..</td></tr>
                <tr><td>아파트</td><td>준비중..</td></tr>
                <tr><td>버스 정류장(시군구)</td><td>1502</td></tr>
              </tbody>
            </table>
            <table>
              <thead><tr><th>경쟁사 이름</th><th>개수</th></tr></thead>
              <tbody><tr><td>까페</td><td>22</td></tr></tbody>
            </table>
            <a class="more" href="#">View All Transactions<svg width="14" height="14"><use href="#go"/></svg></a>
          </section>
        </div>
      </div>
    </div>

    <aside class="notes right">
      <p class="note n-select">지역 및 업종을 선택<br>현재 화서동,카페를 검색</p>
      <p class="note n-rank">각 통계의 1순위를 한눈에<br>볼수있게 정리<i class="line"></i></p>
      <p class="note n-place">지역시설정보<br>동읍면경계로 공공시설 개<br>수와 선택한 경쟁사 개수 보<br>여줌<i class="line"></i></p>
    </aside>
  </main>
</div>
</body>
</html>
```
FILE: styles.css
```css
* { box-sizing: border-box; }
body { margin: 0; background: #fff; color: #333; font-family: "Noto Sans CJK KR", "Noto Sans", sans-serif; font-weight: 350; }
h1, h2, h3, p, ul { margin: 0; padding: 0; font-weight: 350; }
ul { list-style: none; }
a { text-decoration: none; color: #337ab7; }
button { font: inherit; color: inherit; }
.defs { display: block; width: 0; height: 0; }

.slide { position: relative; min-height: 100vh; overflow: hidden; }
.backdrop { position: absolute; inset: 0; width: 100%; height: 100%; fill: none; stroke: #ddd; stroke-width: 3; }

/* heading area */
.top { position: relative; padding-top: 73px; white-space: nowrap; }
.contest { padding-right: 34px; text-align: right; font-size: 38px; line-height: 40px; color: #7f7f7f; }
.caption { padding-left: 47%; font-size: 58px; line-height: 60px; color: #8c8c8c; }
.angle { font-feature-settings: "halt"; }
.hero { position: relative; padding: 190px 0 0 423px; color: #000; white-space: nowrap; }
.hero h1 { font-size: 152px; line-height: 160px; font-weight: 700; }
.hero ul { margin-top: 35px; padding-left: 200px; }
.hero li { display: flex; font-size: 77px; line-height: 80px; }
.hero li::before { content: "•"; width: 114px; font-size: 80px; }

/* search form card */
.search-card { position: absolute; z-index: 2; top: 184px; right: 3px; width: 1264px; max-width: 50%; padding: 20px 14px 18px 48px; background: #fff; border: 4px solid #000; white-space: nowrap; }
.search-card h2 { font-size: 128px; line-height: 138px; text-align: center; }
.search-card h3 { font-size: 80px; line-height: 90px; margin: 27px 0 36px; text-align: center; }
.search-form { padding: 2px 34px 41px 18px; border: 9px solid #f00; border-radius: 4px; }
.field-row { display: flex; align-items: center; gap: 10px; font-size: 32px; line-height: 48px; }
.field-row.centered { justify-content: center; margin-top: 58px; }
.select { position: relative; flex: 1; }
.select select { display: block; width: 100%; height: 53px; padding: 0 26px; appearance: none; border: 2px solid #ccc; border-radius: 6px; background: #fff; color: #555; font: inherit; font-size: 22px; box-shadow: inset 0 2px 2px #0001; }
.select::after { content: ""; position: absolute; right: 10px; top: 21px; border: 5px solid transparent; border-top: 10px solid #444; border-bottom: 0; }
.centered .select { flex: 0 0 342px; }
.centered .select.short { flex-basis: 154px; }
.select.short select { padding-right: 20px; }
.focused select { border-color: #66afe9; box-shadow: 0 0 8px #66afe9; }
.field-row button { height: 54px; width: 84px; padding: 0; border: 2px solid #aaa; background: linear-gradient(#f6f6f6, #ddd); }

/* red connector lines */
.line { position: absolute; z-index: 3; height: 13px; width: 169px; background: #f00; }
.line-down { width: 12px; height: 89px; left: 564px; bottom: -49px; }

/* three-column board */
.board { position: relative; display: grid; grid-template-columns: 754fr 1510fr 736fr; }
.notes { color: #8c8c8c; font-size: 51px; line-height: 60px; white-space: nowrap; }
.note { position: relative; }
.left { padding-left: 42px; }
.file { margin-right: -2px; font-size: 54px; text-align: right; }
.n-map { margin-top: 86px; }
.n-map .line { right: -37px; top: 74px; }
.n-marker { margin-top: 24px; }
.n-circle { margin-top: 41px; }
.n-public { margin: 372px 0 0 -10px; }
.n-public .line { right: -42px; top: 44px; }
.n-select { margin: 160px 0 0 32px; }
.n-rank { margin: 504px 0 0 141px; }
.n-rank .line { left: -174px; top: 27px; }
.n-place { margin: 276px 0 0 141px; }
.n-place .line { left: -191px; top: 39px; }

.dash-head { margin: 14px 21px 20px 19px; padding-bottom: 5px; border-bottom: 1px solid #e7e7e7; }
.dash-head h2 { font-size: 39px; line-height: 48px; }
.dash-head small { font-size: 25px; color: #777; }
.map-title { display: flex; align-items: center; gap: 3px; height: 36px; margin: 0 24px 9px 19px; padding-left: 14px; border-radius: 4px; background: #f4f4f4; font-size: 15px; color: #555; }
.frame { border: 9px solid #f00; border-radius: 4px; background: #fff; }

/* map */
.map-frame { margin: 0 9px 0 5px; padding: 4px 0 0 4px; }
.map { position: relative; overflow: hidden; }
.map-art { display: block; width: 100%; height: auto; }
.roads path { fill: none; stroke: #fff; stroke-width: 9; stroke-linejoin: round; stroke-linecap: round; }
.blocks { fill: #efece8; stroke: #d3cfd6; }
.lb text { font-size: 11px; font-weight: 400; fill: #332e2e; text-anchor: middle; dominant-baseline: central; stroke: #fff9; stroke-width: 2px; paint-order: stroke; }
.lb.road text { font-size: 13px; fill: #666; }
.lb.blue text { fill: #4a5a9a; }
.lb.red text { fill: #a23b3b; }
.line-no { font-size: 12px; fill: #fff; text-anchor: middle; dominant-baseline: central; }
.google { font-size: 22px; font-family: "Open Sans", sans-serif; font-weight: 400; stroke: #fff; stroke-width: 2px; paint-order: stroke; }
.map button { border: 0; padding: 0; background: #fff; color: #555; cursor: pointer; }
.map-type { position: absolute; left: 11px; top: 10px; display: flex; width: 80px; height: 34px; background: #fff; font-size: 12px; }
.map-type button { flex: 1; }
.map-type .on { color: #000; font-weight: 500; }
.info { position: absolute; display: flex; justify-content: space-between; align-items: center; height: 35px; padding: 0 13px 0 16px; background: #fff; box-shadow: 0 1px 4px #0006; color: #222; font-size: 14px; white-space: nowrap; }
.info::after { content: ""; position: absolute; left: 50%; top: 100%; margin-left: -12px; border: 12px solid transparent; border-top: 22px solid #fff; border-bottom: 0; }
.map .info button { font-size: 15px; color: #777; }
.info-a { left: 223px; top: 64px; width: 133px; }
.info-b { left: 495px; top: 246px; width: 188px; }
.info-c { left: 663px; top: 379px; width: 138px; }
.map .full { position: absolute; right: 4px; top: 12px; display: grid; place-items: center; width: 26px; height: 26px; }
.map-zoom { position: absolute; right: 0; bottom: 16px; display: grid; width: 29px; font-size: 24px; font-weight: 500; line-height: 28px; }
.map-zoom .peg { display: grid; place-items: center; height: 29px; margin-bottom: 12px; }

/* stat cards */
.stats { display: grid; grid-template-columns: repeat(4, 1fr); gap: 34px; margin: 5px 7px 3px 4px; padding: 0 13px 0 2px; }
.stat { border-radius: 4px 4px 0 0; overflow: hidden; background: #f4f4f4; }
.stat-top { display: flex; justify-content: space-between; align-items: center; height: 101px; padding: 0 18px 0 16px; color: #fff; text-align: right; white-space: nowrap; }
.stat-top div { padding-bottom: 9px; }
.stat strong { display: block; font-size: 44px; line-height: 48px; font-weight: 350; }
.stat span { display: block; font-size: 16px; line-height: 20px; }
.stat a { display: flex; justify-content: space-between; align-items: center; height: 40px; padding: 0 17px; font-size: 16px; }
.blue .stat-top { background: linear-gradient(#337ab7, #2e6da4); }
.stat.blue { border: solid #337ab7; border-width: 0 1px; }
.green .stat-top { background: #5cb85c; }
.green a { color: #5cb85c; }
.orange .stat-top { background: #f0ad4e; }
.orange a { color: #f0ad4e; }
.crimson .stat-top { background: #d9534f; }
.crimson a { color: #d9534f; }

/* lower panels */
.lower { display: grid; grid-template-columns: 1004fr 502fr; gap: 4px; }
.people { display: grid; grid-template-columns: 1fr 1fr; align-items: start; gap: 34px; padding: 6px 13px 9px 6px; }
.places { padding: 6px 19px 9px 0; }
.panel { border: 1px solid #ddd; border-radius: 4px; padding: 0 17px 14px; background: #fff; box-shadow: 0 1px 2px #0001; font-size: 16px; }
.panel h3 { display: flex; align-items: center; gap: 8px; height: 41px; margin: 0 -17px; padding: 0 0 2px 19px; border-bottom: 1px solid #ddd; background: linear-gradient(#f5f5f5, #e8e8e8); font-size: 18px; }
.donut { display: block; width: calc(100% + 34px); margin: 0 -17px; }
.donut text { fill: #000; text-anchor: middle; }
.donut-name { font-size: 50px; font-weight: 700; }
.donut-value { font-size: 36px; }
.rows { border: 1px solid #ddd; border-radius: 4px; box-shadow: 0 1px 2px #0001; }
.rows li { display: flex; align-items: center; height: 43px; padding: 0 16px 0 18px; border-top: 1px solid #ddd; color: #555; }
.rows li:first-child { border-top: 0; }
.spaced svg { margin-right: 7px; }
.ages { margin-top: 17px; }
.ages svg { margin-right: 2px; }
.rows b { margin-left: 5px; padding: 0 8px; border-radius: 9px; background: #777; color: #fff; font-size: 13px; line-height: 18px; font-weight: 700; }
.rows b:first-of-type { margin-left: auto; }
.more { display: flex; justify-content: flex-end; align-items: center; gap: 4px; margin-top: 22px; line-height: 24px; }
.flush { border-left: 0; border-radius: 0 4px 4px 0; padding-left: 15px; }
.flush h3 { margin-left: -15px; padding-left: 16px; }
table { width: 100%; margin-top: 17px; border-collapse: collapse; table-layout: fixed; }
table + table { margin-top: 25px; }
th, td { height: 38px; padding: 0 9px; border: 1px solid #ddd; text-align: left; line-height: 20px; }
th { font-weight: 700; }
th:first-child { width: 67%; }
tbody tr:nth-child(odd) { background: #f9f9f9; }
```
